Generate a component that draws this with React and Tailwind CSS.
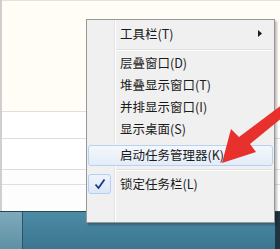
import React from 'react';

const font = { fontFamily: '"Microsoft YaHei", "Noto Sans CJK SC", "Noto Sans", sans-serif' };

function Separator() {
  return (
    <div className="flex h-[7px] items-center pl-[29px] pr-[2px]">
      <div className="h-[2px] flex-1 border-t border-[#e0e0e0] border-b border-b-white" />
    </div>
  );
}

function Item({ label, h = 'h-[22px]', arrow, checked, active }) {
  return (
    <div className={`relative flex items-center ${h}`}>
      {active && (
        <div className="absolute inset-x-[1px] inset-y-0 rounded-[3px] border border-[#b7d1ef] bg-gradient-to-b from-[#f4f8fd] to-[#e3ecf8]" />
      )}
      {checked && (
        <div className="absolute left-[1px] top-[1px] flex h-[20px] w-[23px] items-center justify-center rounded-[3px] border border-[#b4cff0] bg-gradient-to-b from-[#eef4fc] to-[#dce8f7]">
          <svg width="12" height="12" viewBox="0 0 12 12">
            <path d="M1.5 6.5 L4.5 10 L10.5 1.5" stroke="#1c3a8a" strokeWidth="1.8" fill="none" />
          </svg>
        </div>
      )}
      <span className="relative pl-[33px] text-[12.5px] text-[#1b1b1b]">{label}</span>
      {arrow && (
        <svg className="absolute right-[12px] top-[8px]" width="4" height="7" viewBox="0 0 4 7">
          <path d="M0 0 L4 3.5 L0 7 Z" fill="#1b1b1b" />
        </svg>
      )}
    </div>
  );
}

export default function App() {
  return (
    <div className="relative h-[249px] w-[280px] overflow-hidden bg-white" style={font}>
      {/* desktop window behind */}
      <div className="flex h-[211px] flex-col border-l-2 border-[#cfcfcf]">
        <div className="h-[111px] border-t border-[#e4e2d8] bg-[#fffdf5]" />
        <div className="h-[27px] border-t border-[#dedede] bg-white" />
        <div className="h-[31px] border-t border-[#dedede] bg-white" />
        <div className="h-[15px] border-t border-[#dedede] bg-[#fdfdfd]" />
        <div className="flex-1 border-t border-[#dedede] bg-[#fdfdfd]" />
      </div>
      {/* taskbar */}
      <div className="flex h-[38px] border-t border-[#23465a] bg-gradient-to-b from-[#4d8aa3] to-[#3a7690]">
        <div className="w-[23px] border-r border-[#2a5468] bg-gradient-to-b from-[#7fa9ba] to-[#5d91a6]" />
        <div className="flex-1" />
        <div className="w-[5px] bg-[#1f3442]" />
      </div>

      {/* context menu */}
      <div className="absolute left-[86px] top-[19px] flex h-[204px] w-[189px] border border-[#979797] bg-[#f0f0f0] shadow-[2px_2px_2px_rgba(0,0,0,0.25)]">
        <div className="absolute bottom-0 left-[27px] top-0 w-[2px] border-l border-[#e2e3e3] border-r border-r-white" />
        <div className="relative flex w-full flex-col pt-[2px]">
          <Item label="工具栏(T)" h="h-[24px]" arrow />
          <Separator />
          <Item label="层叠窗口(D)" h="h-[21px]" />
          <Item label="堆叠显示窗口(T)" />
          <Item label="并排显示窗口(I)" />
          <Item label="显示桌面(S)" />
          <div className="h-[5px]" />
          <Item label="启动任务管理器(K)" h="h-[21px]" active />
          <Separator />
          <Item label="锁定任务栏(L)" checked />
        </div>
      </div>

      {/* red arrow */}
      <svg className="absolute left-0 top-0" width="280" height="249" viewBox="0 0 280 249">
        <path d="M287 101 L293 109 L250 144 L256 152 L222 163 L231 129 L239 137 Z" fill="#e8312d" />
      </svg>
    </div>
  );
}
